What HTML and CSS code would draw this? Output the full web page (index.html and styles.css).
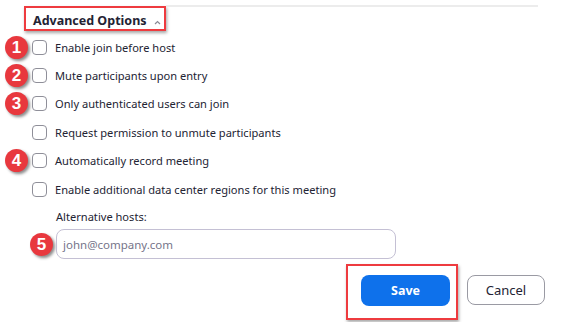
FILE: index.html
```html
<!DOCTYPE html>
<html>
<head>
<meta charset="utf-8">
<link rel="stylesheet" href="styles.css">
</head>
<body>
<div class="panel">
  <div class="header">
    <div class="hl-box head-box">
      <span class="head-title">Advanced Options</span>
      <svg class="caret" width="7" height="5" viewBox="0 0 7 5"><path d="M1 4 L3.5 1.5 L6 4" fill="none" stroke="#8a8a95" stroke-width="1.2"/></svg>
    </div>
    <div class="rule"></div>
  </div>

  <div class="options">
    <div class="opt"><span class="badge">1</span><span class="cb"></span><span class="lbl">Enable join before host</span></div>
    <div class="opt"><span class="badge">2</span><span class="cb"></span><span class="lbl">Mute participants upon entry</span></div>
    <div class="opt"><span class="badge">3</span><span class="cb"></span><span class="lbl">Only authenticated users can join</span></div>
    <div class="opt"><span></span><span class="cb"></span><span class="lbl">Request permission to unmute participants</span></div>
    <div class="opt"><span class="badge">4</span><span class="cb"></span><span class="lbl">Automatically record meeting</span></div>
    <div class="opt"><span></span><span class="cb"></span><span class="lbl">Enable additional data center regions for this meeting</span></div>
  </div>

  <div class="alt-label">Alternative hosts:</div>
  <div class="alt-row">
    <span class="badge badge-alt">5</span>
    <div class="input"><span class="placeholder">john@company.com</span></div>
  </div>

  <div class="actions">
    <div class="hl-box save-box"><button class="btn btn-save">Save</button></div>
    <button class="btn btn-cancel">Cancel</button>
  </div>
</div>
</body>
</html>
```
FILE: styles.css
```css
html, body {
  margin: 0;
  padding: 0;
  background: #ffffff;
}
body {
  width: 569px;
  height: 322px;
  overflow: hidden;
  font-family: "Noto Sans", "Open Sans", sans-serif;
  color: #232333;
}
.panel {
  display: flex;
  flex-direction: column;
}
.header {
  display: flex;
  align-items: flex-start;
  padding: 6px 31px 0 24px;
}
.hl-box {
  border: 2px solid #ee3b3f;
  box-shadow: 1px 2px 3px rgba(0,0,0,0.35);
}
.head-box {
  box-sizing: border-box;
  width: 142px;
  height: 25px;
  display: flex;
  align-items: center;
  padding-left: 7px;
  padding-top: 4px;
  white-space: nowrap;
}
.head-title {
  font-weight: 700;
  font-size: 12.5px;
  color: #232333;
}
.caret {
  margin-left: 7px;
  margin-top: 3px;
}
.rule {
  flex: 1;
  height: 2px;
  margin-top: -1px;
  background: #ececec;
}
.options {
  margin-top: 2px;
  display: flex;
  flex-direction: column;
}
.opt {
  height: 28.4px;
  display: grid;
  grid-template-columns: 32px 15px 1fr;
  align-items: center;
}
.badge {
  width: 23px;
  height: 23px;
  border-radius: 50%;
  background: #e8383e;
  color: #fff;
  font-family: "Liberation Sans", Arial, sans-serif;
  font-weight: 700;
  font-size: 17px;
  line-height: 23px;
  text-align: center;
  box-shadow: 2px 2px 3px rgba(0,0,0,0.45);
  margin-left: 5px;
}
.cb {
  box-sizing: border-box;
  width: 15px;
  height: 15px;
  border: 1px solid #8f8f99;
  border-radius: 4px;
  background: #fff;
}
.lbl {
  margin-left: 8px;
  font-size: 11.1px;
  white-space: nowrap;
  color: #232333;
}
.alt-label {
  margin-top: 6px;
  padding-left: 56px;
  font-size: 11.1px;
  line-height: 16px;
}
.alt-row {
  margin-top: 4px;
  display: flex;
  align-items: center;
}
.badge-alt {
  margin-left: 30px;
  margin-right: 3px;
}
.input {
  box-sizing: border-box;
  width: 340px;
  height: 30px;
  border: 1px solid #c4c0d4;
  border-radius: 8px;
  display: flex;
  align-items: center;
  padding-left: 6px;
}
.placeholder {
  font-size: 11.5px;
  color: #76758a;
}
.actions {
  margin-top: 5px;
  display: flex;
  justify-content: flex-end;
  align-items: flex-start;
  padding-right: 24px;
}
.save-box {
  box-sizing: border-box;
  width: 112px;
  height: 56px;
  padding: 9px 6px 0 13px;
  border-width: 2.5px;
}
.btn {
  box-sizing: border-box;
  border-radius: 8px;
  font-family: "Noto Sans", "Open Sans", sans-serif;
  font-size: 12.5px;
  cursor: pointer;
}
.btn-save {
  width: 89px;
  height: 31px;
  background: #0e71eb;
  border: none;
  color: #fff;
  font-weight: 700;
}
.btn-cancel {
  margin-left: 9px;
  margin-top: 11px;
  width: 78px;
  height: 30px;
  background: #fff;
  border: 1px solid #9a9aa3;
  color: #232333;
  font-size: 13px;
}
```
